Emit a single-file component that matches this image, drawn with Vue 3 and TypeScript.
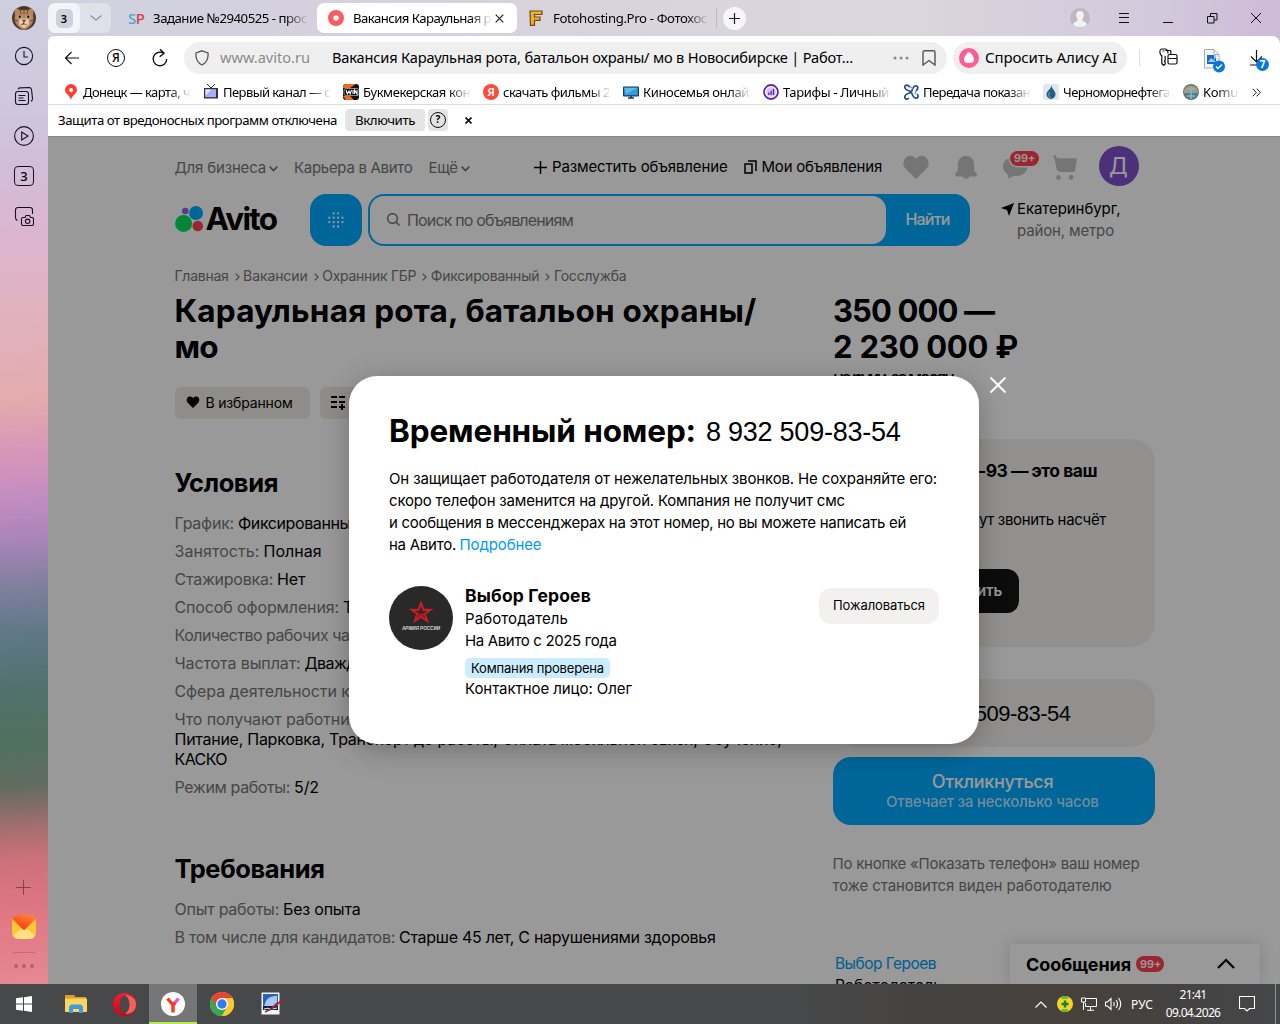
<script setup lang="ts">
import type { Directive } from 'vue'

// Spreads a text run over the given width by adjusting its tracking.
const vFit: Directive<HTMLElement, number> = {
  mounted(el, binding) {
    const natural = el.getBoundingClientRect().width
    const count = (el.textContent ?? '').length
    if (count) el.style.letterSpacing = `${(binding.value - natural) / count}px`
  },
}

interface Param { label: string; lw?: number; rest?: string; value?: string; vw?: number; tail?: string }

const bookmarks = [
  { icon: 'pin', text: 'Донецк — карта, ч', w: 107 },
  { icon: 'tv', text: 'Первый канал — с', w: 107 },
  { icon: 'win', text: 'Букмекерская кон', w: 107 },
  { icon: 'ya', text: 'скачать фильмы 2', w: 107 },
  { icon: 'screen', text: 'Киносемья онлай', w: 106 },
  { icon: 'bars', text: 'Тарифы - Личный', w: 106 },
  { icon: 'swirl', text: 'Передача показан', w: 107 },
  { icon: 'drop', text: 'Черноморнефтега', w: 107 },
  { icon: 'globe', text: 'Komu', w: 35 },
]

const crumbs = [
  { text: 'Главная', w: 54 },
  { text: 'Вакансии', w: 64.5 },
  { text: 'Охранник ГБР', w: 94 },
  { text: 'Фиксированный', w: 108.5 },
  { text: 'Госслужба', w: 72.5 },
]

const dots: [number, number][] = []
for (let r = 0; r < 4; r++) {
  for (let c = 0; c < 4; c++) {
    if ((r === 0 || r === 3) && (c === 0 || c === 3)) continue
    dots.push([1.3 + c * 4.4, 1.3 + r * 4.4])
  }
}

const conditions: Param[] = [
  { label: 'График:', lw: 59.5, value: 'Фиксированный', vw: 122 },
  { label: 'Занятость:', lw: 85, value: 'Полная', vw: 58 },
  { label: 'Стажировка:', lw: 98.5, value: 'Нет', vw: 28.5 },
  { label: 'Способ оформления:', lw: 164.5, value: 'Трудовой договор', vw: 140 },
  { label: 'Количество рабочих ча', lw: 175, rest: 'сов:' },
  { label: 'Частота выплат:', lw: 126, value: 'Дважды в месяц', vw: 125 },
  { label: 'Сфера деятельности к', lw: 175, rest: 'омпании:' },
  { label: 'Что получают работни', lw: 175, rest: 'ки:' },
]

const requirements: Param[] = [
  { label: 'Опыт работы:', lw: 104.5, value: 'Без опыта', vw: 77.5 },
  { label: 'В том числе для кандидатов:', lw: 220.5, value: 'Старше 45 лет, С нарушениями здоровья', vw: 316.5 },
]
</script>

<template>
  <div class="desktop">
    <div class="browser">
      <aside class="side">
        <svg class="cat" width="24" height="24" viewBox="0 0 24 24">
          <defs><clipPath id="catClip"><circle cx="12" cy="12" r="12" /></clipPath></defs>
          <g clip-path="url(#catClip)">
            <rect width="24" height="24" fill="#4a382b" />
            <path d="M2 1l6 3h8l6-3-1 9c2 6-3 12-9 14C6 22 1 16 3 10z" fill="#b5875c" />
            <path d="M8 4l1 4M12 3v5M16 4l-1 4M2 14l4 1M22 14l-4 1" stroke="#6b482f" stroke-width="1" />
            <path d="M7 14c2-2 8-2 10 0 1 5-2 7-5 8-3-1-6-3-5-8z" fill="#e2c9ae" />
            <ellipse cx="7.5" cy="10.8" rx="2.4" ry="1.6" fill="#d8c58d" /><ellipse cx="16.5" cy="10.8" rx="2.4" ry="1.6" fill="#d8c58d" />
            <circle cx="7.7" cy="10.8" r="1.3" fill="#191412" /><circle cx="16.3" cy="10.8" r="1.3" fill="#191412" />
            <path d="M10.5 14h3L12 16zM12 16v2l-3 1M12 18l3 1" fill="#6b3527" stroke="#6b3527" stroke-width=".6" />
          </g>
        </svg>
        <div class="side-list">
          <svg viewBox="0 0 20 20"><circle cx="10" cy="10" r="8.6" /><path d="M10 5v6h4" /></svg>
          <svg viewBox="0 0 20 20"><rect x="1.5" y="5.5" width="13" height="13" rx="2.5" /><path d="M4 3.400c.3-1 1-1.400 2-1.500L15 1.500c1.500 0 2.300.8 2.500 2l1 9c0 1.500-.6 2.400-1.600 2.800M4.500 9.500h7M4.500 12h5M4.500 14.500h7" /></svg>
          <svg viewBox="0 0 20 20"><circle cx="10" cy="10" r="9.400" /><path d="M7.700 6v8l6.300-4z" /></svg>
          <div class="count">3</div>
          <svg viewBox="0 0 20 20"><path d="M3.500 14.500C2 14 1.500 13 1.500 11.500V4c0-1.800.8-2.500 2.500-2.500h12c1.800 0 2.500.8 2.500 2.500v4M9 11.500h2l1-2h3.500l1 2H18c1 0 1.500.5 1.500 1.500v5c0 1-.5 1.500-1.500 1.500H9c-1 0-1.500-.5-1.500-1.500v-5c0-1 .5-1.500 1.500-1.500z" /><circle cx="13.600" cy="15.300" r="2.200" /></svg>
        </div>
        <div class="side-bottom">
          <svg width="15" height="15" viewBox="0 0 15 15"><path d="M7.500 0v15M0 7.500h15" stroke="#86434f" fill="none" /></svg>
          <svg class="mail" width="24" height="24" viewBox="0 0 24 24">
            <defs><linearGradient id="mailTop" x1="1" y1="0" x2=".4" y2="1"><stop offset="0" stop-color="#ff8a3c" /><stop offset="1" stop-color="#f93b10" /></linearGradient></defs>
            <rect width="24" height="24" rx="6.500" fill="#ffc62f" /><path d="M1 20.500L12 11l11 9.500C22 23 20 24 17.500 24h-11C4 24 2 23 1 20.500z" fill="#ffe084" />
            <path d="M6.500 0h11c3 0 5 1.500 6 4L13 14.500q-1 .8-2 0L.5 4c1-2.500 3-4 6-4z" fill="url(#mailTop)" />
          </svg>
          <i class="side-line" />
          <div class="side-dots"><i /><i /><i /></div>
        </div>
      </aside>

      <div class="window">
        <div class="tabs">
          <div class="group">
            <div class="group-count"><b>3</b></div>
            <svg width="14" height="8" viewBox="0 0 14 8"><path d="M1.500 1.500L7 6l5.500-4.500" fill="none" stroke="#8d8e98" stroke-width="1.100" /></svg>
          </div>
          <div class="tab first">
            <div class="sp"><span>S</span><span>P</span></div>
            <div class="cut"><span v-fit="154">Задание №2940525 - прос</span></div>
          </div>
          <div class="tab active">
            <svg width="16" height="16" viewBox="0 0 16 16"><circle cx="8" cy="8" r="8" fill="#ff5a63" /><circle cx="8" cy="8" r="2.700" fill="#fff" /></svg>
            <div class="cut"><span v-fit="138">Вакансия Караульная р</span></div>
            <svg class="x" width="9" height="9" viewBox="0 0 9 9"><path d="M.7.7l7.600 7.600M8.300.7L.7 8.300" stroke="#222" stroke-width="1.200" /></svg>
          </div>
          <div class="tab third">
            <svg width="14" height="16" viewBox="0 0 14 16"><path d="M1 1h12v3.500H5.500v2.500H11v3.300H5.500V15.300H1.500z" fill="#f5b022" stroke="#6b4c18" stroke-width="1.200" /></svg>
            <div class="cut"><span v-fit="154">Fotohosting.Pro - Фотохос</span></div>
          </div>
          <div class="new-tab"><svg width="11" height="11" viewBox="0 0 11 11"><path d="M5.500 0v11M0 5.500h11" stroke="#222" stroke-width="1.200" /></svg></div>
          <div class="controls">
            <svg width="20" height="20" viewBox="0 0 20 20"><circle cx="10" cy="10" r="10" fill="#bdb9c1" /><path d="M10 3c3 0 4 2 3.700 4.700-.3 2-1 3.300-1.400 4 .4 2.300 4 1.700 4.700 4.800-3 3.600-11 3.600-14 0 .7-3.100 4.300-2.500 4.700-4.800-.4-.7-1.100-2-1.400-4C6 5 7 3 10 3z" fill="#f2f1f3" /></svg>
            <svg width="10" height="10" viewBox="0 0 10 10"><path d="M0 .5h10M0 4.500h10M0 9.500h10" stroke="#111" /></svg>
            <svg width="10" height="10" viewBox="0 0 10 10"><path d="M0 9.500h10" stroke="#111" /></svg>
            <svg width="11" height="11" viewBox="0 0 11 11"><path d="M.5 3.500h6.500v6.500H.5zM3.500 3.500v-3h6.500v6.500h-3" fill="none" stroke="#111" /></svg>
            <svg width="10" height="10" viewBox="0 0 10 10"><path d="M0 0l10 10M10 0L0 10" stroke="#111" /></svg>
          </div>
        </div>

        <div class="sheet">
          <div class="toolbar">
            <div class="cell"><svg width="16" height="14" viewBox="0 0 16 14"><path d="M15 7H1.500M7.500 1L1.500 7l6 6" fill="none" stroke="#111" stroke-width="1.200" /></svg></div>
            <div class="cell"><div class="ya">Я</div></div>
            <div class="cell"><svg width="18" height="20" viewBox="0 0 18 20"><path d="M12.500 5.200A6.800 6.800 0 1 0 15.700 11M9 1.200l4 4-4.300 3.500" fill="none" stroke="#111" stroke-width="1.400" /></svg></div>
            <div class="address">
              <svg width="14" height="16" viewBox="0 0 14 16"><path d="M7 .8l6 2.200c.5 5-1 9.500-6 12-5-2.500-6.500-7-6-12z" fill="none" stroke="#555" stroke-width="1.300" /></svg>
              <span v-fit="90" class="host">www.avito.ru</span>
              <span v-fit="521" class="page-title">Вакансия Караульная рота, батальон охраны/ мо в Новосибирске | Работ...</span>
              <svg class="dots" width="16" height="4" viewBox="0 0 16 4"><circle cx="2" cy="2" r="1.500" /><circle cx="8" cy="2" r="1.500" /><circle cx="14" cy="2" r="1.500" /></svg>
              <svg class="flag" width="14" height="16" viewBox="0 0 14 16"><path d="M1 15V2.500C1 1.300 1.600.8 2.700.8h8.600c1.100 0 1.700.5 1.700 1.700V15l-6-4.500z" fill="none" stroke="#555" stroke-width="1.400" /></svg>
            </div>
            <div class="alice">
              <svg width="20" height="20" viewBox="0 0 20 20"><circle cx="10" cy="10" r="10" fill="#ff5c93" /><path d="M10 4.200c1.500 0 2.100 1 3.200 2.900 1.200 2.100 2.200 3.400 1.800 5.100-.5 2.200-2.700 2.900-5 2.900s-4.500-.7-5-2.900c-.4-1.700.6-3 1.800-5.100C7.900 5.200 8.500 4.200 10 4.200z" fill="#fff" /></svg>
              <span v-fit="132">Спросить Алису AI</span>
            </div>
            <i class="sep" />
            <svg class="key" width="20" height="20" viewBox="0 0 20 20"><path d="M9 5.500C9 3 8 1.200 6.500 1H3C1 1.200.8 2 .9 4.500 1 6.500 1.700 7.200 2.800 7.700V15.500L4.500 17.500l1.700-1.500v-1.800l-.8-1 .8-1V8M6.500 2.500h4.500c.5 0 .8.300.8.800V6M10.500 6.500h6c1 0 1.500.5 1.500 1.500v6.500c0 1-.5 1.500-1.500 1.500h-6C9.500 16 9 15.500 9 14.500V8c0-1 .5-1.500 1.500-1.500zM9 10.500h9M3.500 3h2" fill="none" stroke="#111" stroke-width="1.200" /></svg>
            <svg class="file" width="21" height="24" viewBox="0 0 21 24"><path d="M.5.500h9.500l5 5V19H.5z" fill="#f6f6f6" stroke="#aaa" /><path d="M10 .5v5h5" fill="none" stroke="#aaa" /><rect x="3" y="6" width="9" height="9" fill="#1769cf" /><path d="M4 13l3-4 5 4M10 5l3 2-3 4z" fill="#9fd1ff" /><circle cx="15" cy="17.500" r="6" fill="#0878dd" /><path d="M12 17.500l2 2 4-4" fill="none" stroke="#fff" stroke-width="1.300" /></svg>
            <div class="download"><svg width="15" height="16" viewBox="0 0 15 16"><path d="M6.500 0v12M1 6.500l5.500 5.500L12 6.500M0 15h9" fill="none" stroke="#111" stroke-width="1.200" /></svg><b>7</b></div>
          </div>

          <div class="bookmarks">
            <div v-for="b in bookmarks" :key="b.text" class="bookmark">
              <svg width="16" height="16" viewBox="0 0 16 16">
                <path v-if="b.icon === 'pin'" fill-rule="evenodd" d="M8 0a6 6 0 0 1 6 6c0 3.600-4.600 5-6 9.700C6.600 11 2 9.600 2 6a6 6 0 0 1 6-6zm0 4a2 2 0 1 0 0 4 2 2 0 0 0 0-4z" fill="#fc3f30" />
                <g v-else-if="b.icon === 'tv'"><path d="M4 0l4 4 4-4" fill="none" stroke="#333" /><rect x="1" y="4" width="14" height="10.500" fill="#333" /><rect x="2.200" y="5.200" width="10.800" height="8" fill="#a9abf6" /><path d="M2.500 5.500h6l-6 6z" fill="#e2e3ff" /></g>
                <g v-else-if="b.icon === 'win'"><rect width="16" height="16" rx="3" fill="#111" /><path d="M0 3c0-2 1-3 3-3h10L7 4H0zM0 12l3 4h8l-4-4z" fill="#f26a1b" /><rect x="1" y="4.500" width="15" height="7" rx="2" fill="#0a0a0a" stroke="#ddd" stroke-width=".6" /><path d="M3 6l1.300 4L6 7l1.200 3L8.500 6M10 6v4M11.500 10V6l2.500 4V6" fill="none" stroke="#fff" stroke-width="1.100" /></g>
                <g v-else-if="b.icon === 'ya'"><circle cx="8" cy="8" r="8" fill="#fc4b3b" /><text x="8" y="12.200" text-anchor="middle" class="ya-text">Я</text></g>
                <g v-else-if="b.icon === 'screen'"><rect x="0" y="2.500" width="16" height="10" rx="1" fill="#243245" /><rect x="1.200" y="3.700" width="13.600" height="7.600" fill="#2f9be4" /><path d="M1.200 3.700h13.600L3 10z" fill="#5bbcf5" /><path d="M5 14h6M8 12v2" stroke="#243245" stroke-width="1.500" /></g>
                <g v-else-if="b.icon === 'bars'"><circle cx="8" cy="8" r="7" fill="#fff" stroke="#6026ad" stroke-width="1.800" /><circle cx="8" cy="8" r="4.800" fill="#d6c5ee" /><path d="M5.800 11V8.500M8.200 11V6.800M10.500 11V5" stroke="#6026ad" stroke-width="1.400" /></g>
                <g v-else-if="b.icon === 'swirl'" fill="none" stroke="#274b8d" stroke-width="1.700"><path d="M7 3C4 0 1 1 2 4s4 2 6 4 1 5 4 6 4-2 2-4M13 7c3-3 2-6-1-5s-2 4-4 6-5 1-6 4 2 4 4 2" /><path d="M7 3l3 1M13 7l-1 3" stroke="#8aa3cf" /></g>
                <g v-else-if="b.icon === 'drop'"><rect width="16" height="16" rx="3" fill="#e3e6e8" /><path d="M8.500 1c0 4 4 5.500 4 9.300A4.600 4.600 0 0 1 8 15a4.600 4.600 0 0 1-4.500-4.700C3.500 7 8 5.500 8.500 1z" fill="#225f86" /><path d="M7 8c-2 2-1.500 5 .5 5.500" fill="none" stroke="#7ab6d8" /></g>
                <g v-else><circle cx="8" cy="8" r="8" fill="#68737a" /><path d="M1 7c1-7 13-7 14 0z" fill="#d08a59" /><path d="M1 8h14M8 2v13M4 12h8M3.500 5h9" stroke="#6fc1cf" stroke-width="1.600" /></g>
              </svg>
              <div class="cut"><span v-fit="b.w">{{ b.text }}</span></div>
            </div>
            <svg class="more" width="9" height="9" viewBox="0 0 9 9"><path d="M.7.7l3.600 3.800L.7 8.300M4.700.7l3.600 3.800-3.600 3.800" fill="none" stroke="#222" /></svg>
          </div>

          <div class="notice">
            <span v-fit="279">Защита от вредоносных программ отключена</span>
            <button><span v-fit="60">Включить</span></button>
            <div class="help"><i>?</i></div>
            <svg width="7" height="7" viewBox="0 0 7 7"><path d="M.5.500l6 6M6.500.5l-6 6" stroke="#111" stroke-width="1.700" /></svg>
          </div>

          <main class="page">
            <header class="nav">
              <div class="links">
                <span v-fit="91.500">Для бизнеса</span>
                <svg width="9" height="6" viewBox="0 0 9 6"><path d="M.7.700L4.500 4.500 8.300.7" /></svg>
                <span v-fit="118.500" class="career">Карьера в Авито</span>
                <span v-fit="29">Ещё</span>
                <svg width="9" height="6" viewBox="0 0 9 6"><path d="M.7.700L4.500 4.500 8.300.7" /></svg>
              </div>
              <div class="actions">
                <svg width="13" height="13" viewBox="0 0 13 13"><path d="M6.500 0v13M0 6.500h13" stroke="#000" stroke-width="1.500" /></svg>
                <span v-fit="175.500">Разместить объявление</span>
                <svg class="cards" width="13" height="14" viewBox="0 0 13 14"><path d="M1 4h7v9H1zM4 1h8v10" fill="none" stroke="#000" stroke-width="1.500" /></svg>
                <span v-fit="120.500">Мои объявления</span>
              </div>
              <div class="icons">
                <svg width="26" height="24" viewBox="0 0 26 24"><path d="M13 24L2.500 13.500C-1 10 0 3 5 1.200 8.500 0 11.500 1.700 13 4c1.500-2.300 4.500-4 8-2.800C26 3 27 10 23.500 13.500z" /></svg>
                <svg width="22" height="23" viewBox="0 0 22 23"><path d="M11 0c6 0 8.200 4.500 8.200 9v5.500l2.300 3c1 1.500 0 3-1.500 3h-5.500c-.8 3-6.200 3-7 0H2c-1.500 0-2.500-1.500-1.500-3l2.300-3V9C2.800 4.500 5 0 11 0z" /></svg>
                <div class="chat"><svg width="25" height="24" viewBox="0 0 25 24"><path d="M12 2c7 0 12.500 3.500 12.500 9.500S19 21 13 21c-2 0-5 .5-7.500 3 .3-2.500-.3-4-1.500-5.300C1.500 17 0 15 0 11.500 0 6 5 2 12 2z" /></svg><b class="badge">99+</b></div>
                <svg width="24" height="25" viewBox="0 0 24 25"><path d="M0 0c2 0 3 .5 3.500 2l.5 1.300h18c1.500 0 2 .7 1.800 2l-1.500 9.500c-.3 1.700-1 2.200-2.300 2.200H7L4 15.500 1.500 3.500z" /><circle cx="5.500" cy="22.500" r="2.400" /><circle cx="18" cy="22.500" r="2.400" /></svg>
              </div>
              <div class="avatar">Д</div>
            </header>

            <div class="search-row">
              <div class="logo">
                <svg width="29" height="27" viewBox="0 0 29 27"><circle cx="10.300" cy="5" r="3.300" fill="#965eeb" /><circle cx="21" cy="7" r="7" fill="#0af" /><circle cx="8.600" cy="17.500" r="8.500" fill="#04e061" /><circle cx="22.800" cy="20" r="5.300" fill="#ff4053" /></svg>
                <span v-fit="71">Avito</span>
              </div>
              <div class="catalog"><svg width="16" height="16" viewBox="0 0 16 16"><circle v-for="([x, y], i) in dots" :key="i" :cx="x" :cy="y" r="1.150" /></svg></div>
              <div class="search">
                <div class="field">
                  <svg width="13" height="13" viewBox="0 0 13 13"><circle cx="5.500" cy="5.500" r="4.800" /><path d="M9 9l3.500 3.500" /></svg>
                  <span v-fit="166">Поиск по объявлениям</span>
                </div>
                <div class="find"><span v-fit="44">Найти</span></div>
              </div>
              <div class="geo">
                <svg width="13" height="13" viewBox="0 0 13 13"><path d="M13 0L8 13 6 7 0 5z" /></svg>
                <div><p><span v-fit="103.500">Екатеринбург,</span></p><p class="muted"><span v-fit="97">район, метро</span></p></div>
              </div>
            </div>

            <div class="columns">
              <section class="left">
                <div class="crumbs">
                  <template v-for="(c, i) in crumbs" :key="c.text">
                    <svg v-if="i" width="5" height="8" viewBox="0 0 5 8"><path d="M.7.700L4 4 .7 7.300" /></svg>
                    <span v-fit="c.w">{{ c.text }}</span>
                  </template>
                </div>
                <h1><span v-fit="582">Караульная рота, батальон охраны/</span><br /><span v-fit="43">мо</span></h1>
                <div class="buttons">
                  <div class="fav"><svg width="14" height="12" viewBox="0 0 26 24"><path d="M13 24L2.500 13.500C-1 10 0 3 5 1.200 8.500 0 11.500 1.700 13 4c1.500-2.300 4.500-4 8-2.800C26 3 27 10 23.500 13.500z" /></svg><span v-fit="87">В избранном</span></div>
                  <div class="compare"><svg width="15" height="15" viewBox="0 0 15 15"><path d="M0 2h6M8 2h6M0 7h6M8 7h6M0 12h6M8 12h6M11 9v6" stroke="#000" stroke-width="2" /></svg></div>
                </div>
                <h2><span v-fit="103.500">Условия</span></h2>
                <div class="params">
                  <p v-for="p in conditions" :key="p.label"><span v-fit="p.lw" class="muted">{{ p.label }}</span><span v-if="p.rest" class="muted">{{ p.rest }}</span><span v-if="p.value" v-fit="p.vw" class="value">{{ p.value }}</span></p>
                  <p class="benefits"><span v-fit="607">Питание, Парковка, Транспорт до работы, Оплата мобильной связи, Обучение,</span><br /><span v-fit="52.500">КАСКО</span></p>
                  <p><span v-fit="115.500" class="muted">Режим работы:</span><span v-fit="25" class="value">5/2</span></p>
                </div>
                <h2 class="second"><span v-fit="150">Требования</span></h2>
                <div class="params">
                  <p v-for="p in requirements" :key="p.label"><span v-fit="p.lw" class="muted">{{ p.label }}</span><span v-fit="p.vw" class="value">{{ p.value }}</span></p>
                </div>
              </section>

              <section class="right">
                <div class="price"><span v-fit="161">350 000 —</span><br /><span v-fit="185">2 230 000 ₽</span></div>
                <div class="period"><span v-fit="120">на руки, за месяц</span></div>
                <div class="card">
                  <p class="card-title">67<span v-fit="119">-93 — это ваш</span></p>
                  <p class="card-text">смог<span v-fit="127">ут звонить насчёт</span></p>
                  <div class="dark">Подтверд<span v-fit="25">ить</span></div>
                </div>
                <div class="phone"><span v-fit="154">8 932 509-83-54</span></div>
                <div class="respond"><b><span v-fit="121.500">Откликнуться</span></b><span v-fit="212.500">Отвечает за несколько часов</span></div>
                <div class="hint"><span v-fit="307">По кнопке «Показать телефон» ваш номер</span><br /><span v-fit="279">тоже становится виден работодателю</span></div>
                <div class="company"><a><span v-fit="101">Выбор Героев</span></a><br /><span v-fit="107">Работодатель</span></div>
              </section>
            </div>

            <div class="messages"><b><span v-fit="105">Сообщения</span></b><b class="badge">99+</b><svg width="18" height="11" viewBox="0 0 18 11"><path d="M1 10l8-8 8 8" fill="none" stroke="#000" stroke-width="2.200" /></svg></div>

            <div class="overlay">
              <div class="modal">
                <div class="modal-title"><b v-fit="307">Временный номер:</b><span v-fit="194.500">8 932 509-83-54</span></div>
                <div class="modal-text">
                  <span v-fit="548">Он защищает работодателя от нежелательных звонков. Не сохраняйте его:</span><br />
                  <span v-fit="456">скоро телефон заменится на другой. Компания не получит смс</span><br />
                  <span v-fit="517">и сообщения в мессенджерах на этот номер, но вы можете написать ей</span><br />
                  <span v-fit="67">на Авито.</span><a v-fit="82">Подробнее</a>
                </div>
                <div class="author">
                  <svg width="64" height="64" viewBox="0 0 64 64">
                    <circle cx="32" cy="32" r="32" fill="#292929" />
                    <path fill-rule="evenodd" d="M32 14l3.200 8.800h9.300l-7.500 5.500 3 9.200-8-5.600-8 5.600 3-9.200-7.500-5.500h9.300zM32 20l-1.800 5h-4.400l3.500 2.600-1.300 4.600 4-2.700 4 2.700-1.300-4.600 3.500-2.600h-4.400z" fill="#cb1d25" />
                    <path d="M28 26l4 2 4-2-1 6-3-2-3 2z" fill="#a51920" />
                    <text x="32" y="43.500" text-anchor="middle" textLength="38" lengthAdjust="spacingAndGlyphs" class="army">АРМИЯ РОССИИ</text>
                  </svg>
                  <div class="info">
                    <b><span v-fit="126">Выбор Героев</span></b>
                    <p><span v-fit="103">Работодатель</span></p>
                    <p><span v-fit="151.500">На Авито с 2025 года</span></p>
                    <div class="checked"><span v-fit="133">Компания проверена</span></div>
                    <p><span v-fit="167">Контактное лицо: Олег</span></p>
                  </div>
                  <button><span v-fit="92">Пожаловаться</span></button>
                </div>
                <svg class="close" width="18" height="18" viewBox="0 0 18 18"><path d="M1.500 1.500l15 15M16.500 1.500l-15 15" stroke="#fff" stroke-width="2" /></svg>
              </div>
            </div>
          </main>
        </div>
      </div>
    </div>

    <footer class="taskbar">
      <div class="task start"><svg width="16" height="16" viewBox="0 0 16 16"><path d="M0 2.300L7 1.300v6.200H0zM8 1.200L16 0v7.500H8zM0 8.500h7v6.200l-7-1zM8 8.500h8V16l-8-1.200z" fill="#fff" /></svg></div>
      <div class="task"><svg width="22" height="18" viewBox="0 0 22 18"><path d="M0 0h9l1.500 2H21v14H0z" fill="#e0a01f" /><path d="M0 3.500h22V17H0z" fill="#fcd45f" /><path d="M4 18v-6.500L6 9.500h10l2 2V18h-4v-4H8v4z" fill="#3f9be0" /></svg></div>
      <div class="task"><svg width="23" height="23" viewBox="0 0 23 23"><defs><linearGradient id="opera" x1="0" y1="0" x2="0" y2="1"><stop offset="0" stop-color="#ff1b2d" /><stop offset="1" stop-color="#c20a1c" /></linearGradient></defs><circle cx="11.500" cy="11.500" r="11.500" fill="url(#opera)" /><path d="M13 2c6 1 10 4 10 9.500S19 21 13 21z" fill="#ff5b5b" /><ellipse cx="11.500" cy="11.500" rx="5" ry="9" fill="#474849" /></svg></div>
      <div class="task current"><svg width="24" height="24" viewBox="0 0 24 24"><circle cx="12" cy="12" r="12" fill="#fff" /><path d="M6.500 6.500L12 13M12 12v8.500" stroke="#f8391d" stroke-width="3.400" fill="none" /><path d="M12 13l5.500-6.500" stroke="#e556d8" stroke-width="3.400" /><path d="M12 13l2-2.400" stroke="#f8391d" stroke-width="3.400" /></svg></div>
      <div class="task"><svg width="24" height="24" viewBox="0 0 24 24"><circle cx="12" cy="12" r="12" fill="#fcc934" /><path d="M12 12L1.600 6A12 12 0 0 0 12 24l5.200-9z" fill="#34a853" /><path d="M12 12V6h10.400A12 12 0 0 0 1.600 6l5.200 9z" fill="#ea4335" /><path d="M17.200 15L12 24A12 12 0 0 0 22.400 6H12z" fill="#fcc934" /><circle cx="12" cy="12" r="6" fill="#fff" /><circle cx="12" cy="12" r="4.700" fill="#2f7de9" /></svg></div>
      <div class="task pic"><svg width="23" height="24" viewBox="0 0 23 24"><rect x=".5" y=".5" width="18" height="22" fill="#f4f6fa" /><rect x="2" y="2" width="15" height="12" fill="#2b62bd" /><path d="M4 12c1-6 6-8 12-8v6l-4 4H3z" fill="#a9c9f2" /><path d="M2 14h15v4H2z" fill="#151b38" /><path d="M3 17c4-2 8 1 13-1" stroke="#eee" fill="none" /><path d="M22.500 7.500L9 17.500" stroke="#b81e25" stroke-width="1.800" /><path d="M9 17.500l-5 2.500" stroke="#555" stroke-width="1.800" /></svg></div>
      <div class="tray">
        <svg width="12" height="7" viewBox="0 0 12 7"><path d="M.5 6.500L6 1l5.500 5.500" fill="none" stroke="#fff" stroke-width="1.200" /></svg>
        <svg width="16" height="16" viewBox="0 0 16 16"><circle cx="8" cy="8" r="8" fill="#f4d32b" /><path d="M4 1a8 8 0 0 1 8 0L10 3H5zM4 15a8 8 0 0 0 8 0l-2-2H5z" fill="#6fb536" /><path d="M8 4.500v7M4.500 8h7" stroke="#16832f" stroke-width="2.400" /></svg>
        <svg width="16" height="14" viewBox="0 0 16 14"><path d="M5 1.500h10.500v8H4.500V6M9.500 9.500v3.500M6 13.300h7M.5 1h4v4h-4zM2.500 5v8" fill="none" stroke="#fff" /></svg>
        <svg width="17" height="14" viewBox="0 0 17 14"><path d="M.5 5h2L6 1.500v11L2.500 9h-2zM8.500 5q1.500 2 0 4M11 3q3 4 0 8M13.500 1q4.500 6 0 12" fill="none" stroke="#fff" stroke-width="1.100" /></svg>
        <span class="lang"><span v-fit="22">РУС</span></span>
        <div class="clock"><span v-fit="27">21:41</span><span v-fit="54.500">09.04.2026</span></div>
        <svg class="note" width="16" height="16" viewBox="0 0 16 16"><path d="M.5.500h15v12H10.500L8 15l-2.500-2.500H.5z" fill="none" stroke="#fff" stroke-width="1.100" /></svg>
        <i class="edge" />
      </div>
    </footer>
  </div>
</template>

<style>
body { margin: 0; overflow: hidden; }
</style>

<style scoped>
* { box-sizing: border-box; }
p, h1, h2 { margin: 0; }
svg { display: block; flex: none; }
.desktop { width: 1280px; height: 1024px; display: flex; flex-direction: column; overflow: hidden; font-family: "Noto Sans", sans-serif; color: #000; white-space: nowrap; }
.browser { height: 984px; display: flex; background: linear-gradient(90deg, #d0d0de 0, #d6d2dd 35%, #dbd6dd 70%, #d4c9dc 90%, #cdbbd8 100%); }

.side { width: 48px; display: flex; flex-direction: column; align-items: center; padding-top: 6px; background: linear-gradient(177deg, #cfcfdf 0, #cfc8de 100px, #d1bfda 155px, #dcb5d0 235px, #e1b2bd 320px, #e3abad 400px, #d897b8 450px, #c68dc1 495px, #a985b9 540px, #7d7f9b 590px, #5f7886 635px, #51716c 690px, #52705f 745px, #606c5e 785px, #a76f70 830px, #cd717b 860px, #e07882 915px, #e68893 984px); }
.side-list { display: flex; flex-direction: column; gap: 20px; margin-top: 16px; }
.side-list svg { width: 20px; height: 20px; fill: none; stroke: #161320; stroke-width: 1.1; }
.count { width: 20px; height: 20px; border: 1px solid #161320; border-radius: 4px; font: 500 13px/18px "Noto Sans", sans-serif; text-align: center; }
.side-bottom { margin-top: auto; height: 104px; display: flex; flex-direction: column; align-items: center; }
.side-bottom > svg:first-child { margin-right: 1px; }
.mail { margin-top: 20px; }
.side-line { width: 22px; height: 1px; margin-top: 13px; background: #b9707c; }
.side-dots { display: flex; gap: 4px; margin-top: 11px; }
.side-dots i { width: 4px; height: 4px; border-radius: 2px; background: #b0636f; }

.window { width: 1232px; display: flex; flex-direction: column; }
.tabs { height: 36px; display: flex; align-items: center; font-size: 13.2px; line-height: 30px; }
.group { width: 63px; height: 30px; border-radius: 7px; background: #dfe0e8; display: flex; align-items: center; gap: 9px; }
.group-count { width: 32px; height: 30px; border-radius: 7px; background: #f3f4f7; display: flex; align-items: center; justify-content: center; }
.group-count b { width: 17px; height: 19px; border-radius: 5px; background: #d0d1de; font-size: 11px; line-height: 19px; text-align: center; font-weight: 600; }
.tab { display: flex; align-items: center; height: 30px; }
.first { width: 206px; padding-left: 17px; gap: 8px; }
.sp { width: 17px; display: flex; font: 500 15px/30px "Noto Sans", sans-serif; color: #43a6df; letter-spacing: -.5px; }
.sp span + span { color: #dc3d45; }
.cut { overflow: hidden; -webkit-mask-image: linear-gradient(90deg, #000 calc(100% - 22px), transparent); mask-image: linear-gradient(90deg, #000 calc(100% - 22px), transparent); }
.tab .cut { width: 155px; }
.active { width: 200px; background: #fff; border-radius: 7px; padding: 0 12px 0 11px; gap: 9px; }
.active .cut { width: 139px; }
.active .x { margin-left: -6px; }
.third { width: 200px; padding-left: 12px; gap: 10px; border-right: 1px solid #bfbbc4; height: 20px; }
.new-tab { width: 23px; height: 23px; border-radius: 50%; background: #f6f5f8; margin-left: 6px; display: flex; align-items: center; justify-content: center; }
.controls { margin-left: auto; display: grid; grid-template-columns: repeat(5, 44px); justify-items: center; align-items: center; margin-right: 2px; }

.sheet { height: 948px; background: #fff; border-radius: 6px 8px 0 0; display: flex; flex-direction: column; overflow: hidden; }
.toolbar { height: 44px; display: flex; align-items: center; padding-left: 2px; font-size: 15px; line-height: 22px; }
.cell { width: 44px; display: flex; justify-content: center; }
.ya { width: 18px; height: 18px; border: 1.2px solid #111; border-radius: 50%; font: 500 12px/15px "Noto Sans", sans-serif; text-align: center; }
.address { width: 763px; height: 32px; margin-left: 2px; border-radius: 16px; background: #efefef; display: flex; align-items: center; padding: 0 11px; font-size: 14.6px; }
.address span, .alice span { position: relative; top: -1px; }
.host { margin-left: 11px; color: #8b8b8b; }
.page-title { margin-left: 22px; }
.dots { margin-left: auto; fill: #8a8a8a; }
.flag { margin-left: 13px; }
.alice { width: 174px; height: 32px; margin-left: 6px; border-radius: 16px; background: #efefef; display: flex; align-items: center; padding-left: 6px; gap: 6px; }
.sep { width: 1px; height: 16px; background: #ddd; margin-left: 12px; }
.key { margin-left: 19px; }
.file { margin-left: 25px; margin-top: 5px; }
.download { display: flex; margin-left: 25px; position: relative; }
.download b { position: absolute; left: 6px; top: 8px; width: 13px; height: 13px; border-radius: 50%; background: #0878dd; color: #fff; font-size: 10px; line-height: 13px; text-align: center; }
.bookmarks { height: 24px; display: flex; align-items: center; padding-left: 15px; font-size: 13px; line-height: 20px; }
.bookmark { width: 140px; display: flex; align-items: center; gap: 4px; }
.bookmark .cut { width: 108px; }
.bookmark:nth-child(9) { width: 60px; }
.bookmark:nth-child(9) .cut { width: 36px; }
.ya-text { font: 600 11.500px "Noto Sans", sans-serif; fill: #fff; }
.more { margin-left: 9px; }
.notice { height: 32px; border-top: 1px solid #dcdcdc; display: flex; align-items: center; padding: 0 0 1px 10px; font-size: 13.2px; line-height: 20px; }
.notice button { width: 80px; height: 22px; margin-left: 8px; padding: 0; border: 0; border-radius: 4px; background: #e4e4e4; font: 13.3px/21px "Noto Sans", sans-serif; }
.help { width: 20px; height: 22px; margin: 0 17px 0 3px; border-radius: 4px; background: #e4e4e4; display: flex; align-items: center; justify-content: center; }
.help i { width: 16px; height: 16px; border: 1.3px solid #111; border-radius: 50%; font: 700 10px/13px "Noto Sans", sans-serif; text-align: center; }

.page { height: 848px; position: relative; overflow: hidden; background: #fff; font-family: Inter, sans-serif; padding-left: 126.5px; font-size: 16px; }
.page button { font-family: inherit; border: 0; padding: 0; }
.muted { color: #757575; }
.nav { height: 58px; padding-top: 2px; display: flex; align-items: center; font-size: 15px; line-height: 20px; }
.links { width: 359.5px; padding-top: 3px; display: flex; align-items: center; color: #757575; gap: 3px; }
.links svg { fill: none; stroke: #757575; stroke-width: 1.7; margin-top: 2px; }
.career { margin: 0 13px 0 13px; }
.actions { width: 369px; display: flex; align-items: center; gap: 5px; padding-top: 2px; }
.cards { margin-left: 11px; }
.icons { display: flex; align-items: center; fill: #c4c4c4; width: 195.5px; padding-top: 2px; }
.icons > svg:nth-child(2) { margin-left: 26px; }
.chat { margin-left: 26px; display: flex; position: relative; }
.icons > svg:nth-child(4) { margin-left: 25px; margin-top: 1px; }
.badge { height: 15px; padding: 0 4px; border-radius: 8px; background: #ff4053; color: #fff; font-size: 11px; line-height: 15px; font-weight: 600; }
.chat .badge { position: absolute; left: 7px; top: -4px; width: 29px; box-shadow: 0 0 0 1.500px #fff; }
.avatar { width: 40px; height: 40px; border-radius: 50%; background: #8151cb; color: #fff; font-size: 23px; line-height: 40px; text-align: center; }

.search-row { height: 52px; display: flex; align-items: center; }
.logo { width: 135.5px; display: flex; align-items: center; gap: 2px; padding-bottom: 2px; }
.logo span { font-size: 31.5px; line-height: 32px; font-weight: 700; }
.logo svg { margin-top: 1px; }
.catalog { width: 52px; height: 52px; border-radius: 16px; background: #0af; display: flex; align-items: center; justify-content: center; }
.catalog svg { fill: #fff; }
.search { width: 602px; height: 52px; margin-left: 6px; border-radius: 16px; background: #0af; padding: 2px; display: flex; }
.field { width: 516px; border-radius: 14px; background: #fff; display: flex; align-items: center; padding: 0 0 1px 17px; gap: 7px; color: #757575; }
.field svg { fill: none; stroke: #757575; stroke-width: 1.5; }
.find { flex: 1; color: #fff; text-align: center; line-height: 47px; font-weight: 500; padding-left: 1px; }
.geo { margin-left: 31px; display: flex; gap: 3px; font-size: 15px; line-height: 22px; padding-bottom: 1px; }
.geo svg { margin-top: 5px; }

.columns { display: flex; padding-top: 20px; }
.left { width: 658.5px; }
.crumbs { height: 20px; display: flex; align-items: center; gap: 5px; font-size: 14px; line-height: 20px; color: #757575; }
.crumbs svg { fill: none; stroke: #757575; stroke-width: 1.2; margin: 2px 0 0 1px; }
.crumbs svg + span { margin-left: -1.4px; }
h1 { margin-top: 6px; padding-top: 1px; height: 72px; font-size: 31.5px; line-height: 36px; font-weight: 700; }
.buttons { display: flex; gap: 10px; margin-top: 23px; }
.buttons > div { height: 32px; border-radius: 6px; background: #efece6; display: flex; align-items: center; padding: 0 0 2px 11px; }
.fav { width: 135px; gap: 6px; font-size: 14px; }
.compare { width: 60px; }
h2 { margin-top: 47px; font-size: 25.5px; line-height: 32px; font-weight: 700; position: relative; top: .5px; }
h2.second { margin-top: 55px; }
.params { margin-top: 15px; line-height: 20px; display: flex; flex-direction: column; gap: 8px; }
.value { margin-left: 4px; }
.params .benefits { margin-top: -8px; }

.right { width: 322px; padding-top: 26px; }
.price { height: 72px; padding-top: 1px; font-size: 31px; line-height: 36px; font-weight: 700; }
.period { height: 75px; padding-top: 2px; font-size: 18px; line-height: 24px; font-weight: 500; }
.card { height: 208px; border-radius: 24px; background: #f2f1ed; text-align: right; padding-top: 20px; }
.card-title { font-size: 17.5px; line-height: 24px; font-weight: 700; padding-right: 58px; }
.card-text { font-size: 15px; line-height: 22px; padding: 26px 49px 0 0; }
.dark { width: 170px; height: 44px; margin: 38px 0 0 16px; border-radius: 12px; background: #141414; color: #fff; line-height: 44px; padding-right: 17px; font-size: 15px; font-weight: 600; }
.phone { height: 68px; margin-top: 32px; border-radius: 24px; background: #f2f1ed; font: 22px/70px "Liberation Sans", sans-serif; text-align: center; padding-right: 1px; }
.respond { height: 68px; margin-top: 10px; border-radius: 18px; background: #0af; color: #fff; display: flex; flex-direction: column; align-items: center; padding: 14px 3px 0 0; font-size: 15px; line-height: 18px; font-weight: 500; }
.respond b { font-size: 18px; line-height: 22px; font-weight: 500; }
.respond > span { opacity: .75; }
.hint { margin-top: 28px; margin-left: -.5px; font-size: 15px; line-height: 22px; color: #757575; }
.company { margin: 56px 0 0 2px; font-size: 15.5px; line-height: 22px; }
.company a { color: #009cf0; }

.messages { position: absolute; left: 962px; top: 808px; width: 250px; height: 40px; background: #fff; border-radius: 4px; box-shadow: 0 0 16px rgba(0, 0, 0, .16); display: flex; align-items: center; padding-left: 16px; font-size: 18px; }
.messages > b:first-child { font-weight: 700; width: 105px; }
.messages .badge { width: 28px; height: 16px; line-height: 16px; margin-left: 5px; }
.messages svg { margin-left: 53px; margin-bottom: 2px; }

.overlay { position: absolute; inset: 0; background: rgba(0, 0, 0, .4); display: flex; align-items: center; justify-content: center; box-shadow: inset 0 1px 0 rgba(0, 0, 0, .12); }
.modal { width: 630px; height: 368px; border-radius: 28px; background: #fff; box-shadow: 0 6px 28px rgba(0, 0, 0, .25); padding: 35px 40px; position: relative; }
.modal-title { height: 40px; display: flex; align-items: baseline; gap: 10px; font-size: 31.5px; line-height: 40px; }
.modal-title span { font: 27px/38px "Liberation Sans", sans-serif; position: relative; top: -1px; }
.modal-text { margin-top: 17px; font-size: 15px; line-height: 22px; }
.modal a { margin-left: 3.500px; color: #009cf0; }
.author { display: flex; margin-top: 30px; }
.info { width: 354px; margin-left: 12px; font-size: 15px; line-height: 22px; }
.info b { display: block; font-size: 17.5px; line-height: 20px; padding-bottom: 2px; font-weight: 700; }
.checked { width: 145px; height: 20px; margin-top: 6px; border-radius: 5px; background: #ccedff; padding-left: 6px; font-size: 13px; line-height: 20px; }
.author button { width: 120px; height: 36px; margin-top: 2px; padding-bottom: 2px; border-radius: 12px; background: #f2f1f0; font-size: 13px; line-height: 34px; color: #000; }
.army { font: italic 700 4.500px "Liberation Sans", sans-serif; fill: #ddd; }
.close { position: absolute; left: 639.5px; top: 0; }

.taskbar { height: 40px; display: flex; background: linear-gradient(90deg, #474849 0, #474849 62%, #454341 72%, #47413c 84%, #444241 92%, #464749 100%); color: #fff; }
.task { width: 49px; display: flex; align-items: center; justify-content: center; }
.start { width: 51px; padding-right: 3px; }
.current { width: 48px; background: #757677; border-bottom: 2px solid #b4ea55; padding-top: 2px; }
.pic { padding-left: 3px; width: 50px; }
.tray { margin-left: auto; display: flex; align-items: center; font-size: 12px; }
.tray svg { margin-right: 9px; }
.tray svg:nth-child(1) { margin-right: 10px; }
.tray svg:nth-child(2), .tray svg:nth-child(3) { margin-right: 8px; }
.lang { width: 22px; }
.clock { width: 56px; margin-left: 12px; display: flex; flex-direction: column; align-items: center; line-height: 18px; padding-bottom: 1px; }
.tray .note { margin: 0 20px 0 18px; }
.edge { width: 1px; height: 40px; background: #929292; margin-right: 4px; }
</style>
